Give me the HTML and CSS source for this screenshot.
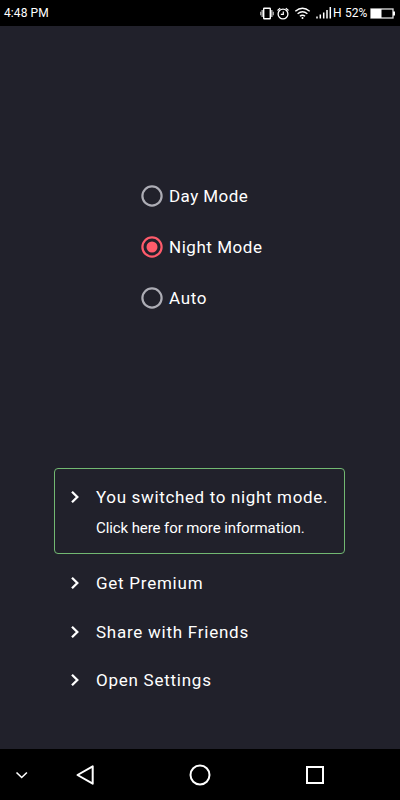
FILE: index.html
```html
<!DOCTYPE html>
<html lang="en">
<head>
<meta charset="utf-8">
<title>Night Mode</title>
<link rel="stylesheet" href="styles.css">
</head>
<body>
<div class="screen">
  <header class="status">
    <span class="time">4:48 PM</span>
    <svg class="status-icons" width="75" height="26" viewBox="258 0 75 26" fill="none" stroke="#fff">
      <rect x="263.700" y="8.200" width="6.600" height="10.600" rx="0.600" stroke-width="1.400"/>
      <path d="M262.200 10v7M271.800 10v7" stroke="#aaa" stroke-width="1.500"/>
      <path d="M260.700 11.800v3.400M273.300 11.800v3.400" stroke="#aaa" stroke-width="1.300"/>
      <circle cx="283" cy="14" r="4.900" stroke-width="1.300"/>
      <path d="M283.300 11.500v2.800h-2.500M277.500 10.500l2.700-2.400M288.500 10.500l-2.700-2.400" stroke-width="1.200"/>
      <path d="M295.300 11.300q7.200-6 14.400 0M297.600 13.800q4.900-4 9.800 0M299.900 16.300q2.600-2 5.200 0" stroke-width="1.400"/>
      <circle cx="302.500" cy="18" r="1" fill="#fff" stroke="none"/>
      <path d="M317 18.500v-2M320.300 18.500v-4M323.700 18.500v-6M327 18.500v-8.500M330.300 18.500v-11.500" stroke-width="1.500"/>
    </svg>
    <span class="network">H</span>
    <span class="percent">52%</span>
    <svg class="battery" width="26" height="26" viewBox="370 0 26 26">
      <rect x="371" y="9" width="22" height="9" fill="none" stroke="#ddd" stroke-width="1.300"/>
      <path d="M371 9h10.500v9h-10.500zM393 11.500h2v4h-2z" fill="#fff"/>
    </svg>
  </header>
  <main class="content">
    <div class="modes">
      <div class="mode"><svg class="radio" viewBox="0 0 22 22"><circle cx="11" cy="11" r="9.600"/></svg><span class="day">Day Mode</span></div>
      <div class="mode"><svg class="radio on" viewBox="0 0 22 22"><circle cx="11" cy="11" r="9.600"/><circle class="dot" cx="11" cy="11" r="5.500"/></svg><span class="night">Night Mode</span></div>
      <div class="mode"><svg class="radio" viewBox="0 0 22 22"><circle cx="11" cy="11" r="9.600"/></svg><span>Auto</span></div>
    </div>
    <div class="notice">
      <div class="item"><svg class="chevron" viewBox="0 0 10 14"><path d="M2 1.800l5.300 5.200-5.300 5.200"/></svg><span class="headline">You switched to night mode.</span></div>
      <p>Click here for more information.</p>
    </div>
    <nav class="links">
      <div class="item"><svg class="chevron" viewBox="0 0 10 14"><path d="M2 1.800l5.300 5.200-5.300 5.200"/></svg><span>Get Premium</span></div>
      <div class="item"><svg class="chevron" viewBox="0 0 10 14"><path d="M2 1.800l5.300 5.200-5.300 5.200"/></svg><span>Share with Friends</span></div>
      <div class="item"><svg class="chevron" viewBox="0 0 10 14"><path d="M2 1.800l5.300 5.200-5.300 5.200"/></svg><span>Open Settings</span></div>
    </nav>
  </main>
  <footer class="navbar">
    <svg width="400" height="51" viewBox="0 749 400 51" fill="none" stroke="#fff">
      <path d="M16.500 772.500l5.200 5 5.200-5" stroke-width="1.600"/>
      <path d="M92.700 766.300v17.400l-15.200-8.700z" stroke-width="2" stroke-linejoin="round"/>
      <circle cx="200" cy="775" r="9.500" stroke-width="2"/>
      <rect x="307" y="767" width="16" height="16" stroke-width="2"/>
    </svg>
  </footer>
</div>
</body>
</html>
```
FILE: styles.css
```css
* { box-sizing: border-box; }
body { margin: 0; font-family: Roboto, sans-serif; color: #fff; background: #21212b; }
.screen { width: 400px; height: 800px; display: flex; flex-direction: column; overflow: hidden; }
.status { height: 26px; background: #000; display: flex; align-items: center; padding: 0 4px; font-size: 12px; line-height: 26px; }
.time { width: 254px; letter-spacing: .1px; }
.status svg { flex: none; }
.network { width: 12px; }
.percent { width: 25px; white-space: nowrap; }
.content { flex: 1; padding-top: 144.500px; }
.modes { padding-left: 141.300px; height: 297.500px; }
.mode { display: flex; align-items: center; gap: 5.700px; height: 51px; font-size: 17px; letter-spacing: .7px; }
.day { letter-spacing: .45px; }
.night { letter-spacing: .55px; }
.mode span { margin-top: -1px; }
.radio { width: 22px; height: 22px; fill: none; stroke: #adadb5; stroke-width: 2.200; }
.radio.on { stroke: #ff5b6b; }
.dot { fill: #ff5b6b; stroke: none; }
.notice { width: 291px; height: 86px; margin-left: 54px; border: 1px solid #72b872; border-radius: 4px; padding: 4px 0 0 15px; }
.item { display: flex; align-items: center; height: 48.500px; font-size: 17px; letter-spacing: .75px; white-space: nowrap; }
.headline { letter-spacing: .65px; }
.chevron { width: 10px; height: 14px; margin-right: 16px; fill: none; stroke: #fff; stroke-width: 2.300; }
.notice p { margin: -4px 0 0 26px; font-size: 15px; letter-spacing: -.09px; line-height: 20px; white-space: nowrap; }
.links { padding: 5px 0 0 70px; }
.navbar { height: 51px; background: #000; }
.navbar svg { display: block; }
```
